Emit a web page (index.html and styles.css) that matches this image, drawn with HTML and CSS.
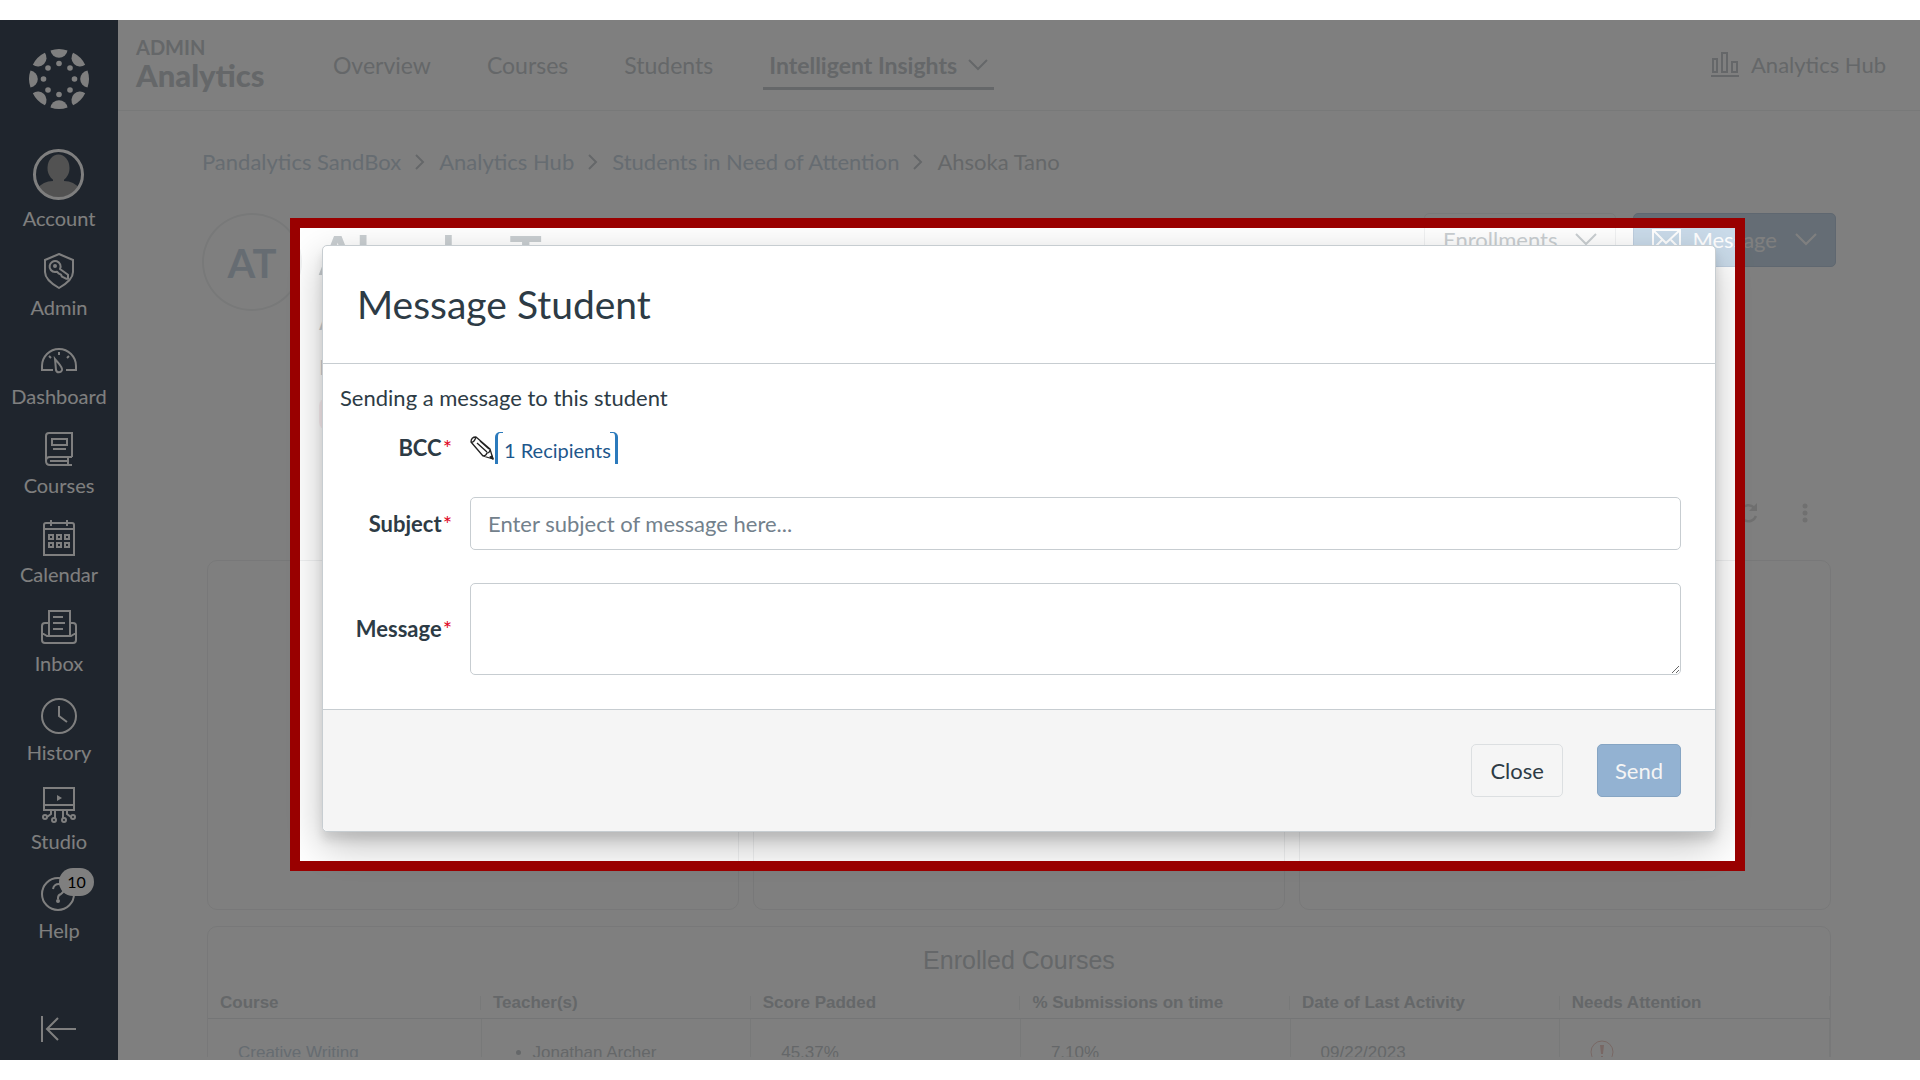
FILE: index.html
```html
<!DOCTYPE html>
<html lang="en">
<head>
<meta charset="utf-8">
<title>Message Student</title>
<link rel="stylesheet" href="styles.css">
</head>
<body>
<div class="frame">
  <nav class="sidebar" aria-label="Global navigation">
    <a class="logo" href="#" aria-label="Home">
      <svg viewBox="0 0 60 60" width="60" height="60" fill="currentColor">
        <defs><g id="petal"><path d="M21.500 1.500Q30-1.500 38.500 1.500A8.600 8.600 0 0 1 21.500 1.500Z"/></g></defs>
        <use href="#petal"/><use href="#petal" transform="rotate(45 30 30)"/><use href="#petal" transform="rotate(90 30 30)"/><use href="#petal" transform="rotate(135 30 30)"/><use href="#petal" transform="rotate(180 30 30)"/><use href="#petal" transform="rotate(225 30 30)"/><use href="#petal" transform="rotate(270 30 30)"/><use href="#petal" transform="rotate(315 30 30)"/>
        <circle cx="30" cy="14.500" r="2.800"/><circle cx="41" cy="19" r="2.800"/><circle cx="45.500" cy="30" r="2.800"/><circle cx="41" cy="41" r="2.800"/><circle cx="30" cy="45.500" r="2.800"/><circle cx="19" cy="41" r="2.800"/><circle cx="14.500" cy="30" r="2.800"/><circle cx="19" cy="19" r="2.800"/>
      </svg>
    </a>
    <a class="item" href="#">
      <svg viewBox="0 0 51 51" width="51" height="51">
        <clipPath id="face"><circle cx="25.500" cy="25.500" r="23"/></clipPath>
        <g clip-path="url(#face)" fill="#a4a4a4"><ellipse cx="25.500" cy="19" rx="11" ry="13.500"/><path d="M20 28h11v4q10 0 16 8v11H4V40q6-8 16-8z"/></g>
        <circle cx="25.500" cy="25.500" r="24" fill="none" stroke="#fff" stroke-width="3"/>
      </svg>
      <span>Account</span>
    </a>
    <a class="item" href="#">
      <svg class="icon" viewBox="0 0 36 36"><path d="M18 1 32 7V19c0 7-7 12-14 16C11 31 4 26 4 19V7z"/><path d="M19 16a5.500 5.500 0 1 0-5 3l2-.3 2 2 2 1 1 2 4 2h2v-4z" stroke-linejoin="round"/><circle cx="14" cy="13" r="1"/></svg>
      <span>Admin</span>
    </a>
    <a class="item" href="#">
      <svg class="icon" viewBox="0 0 36 36"><path d="M12 28H1V24a17 17 0 0 1 34 0v4H25M18 10v3M8 14l2 2M28 14l-2 2M14 17l1 11c.5 3 5 3 6 0 .5-3-3-6-7-11z"/></svg>
      <span>Dashboard</span>
    </a>
    <a class="item" href="#">
      <svg class="icon" viewBox="0 0 36 36"><path d="M31 26V2H8Q5 2 5 5v25q0 4 4 4h22M31 26H9q-4 0-4 4M27 26v8M9 30h17M11 8h15v6H11zM12 18h13"/></svg>
      <span>Courses</span>
    </a>
    <a class="item" href="#">
      <svg class="icon" viewBox="0 0 36 36"><path d="M3 35V5q0-2 2-2h26q2 0 2 2v30zM3 9h30M10 0v6M26 0v6"/><path d="M8 15h4v4H8zM16 15h4v4h-4zM24 15h4v4h-4zM8 23h4v4H8zM16 23h4v4h-4zM24 23h4v4h-4z"/></svg>
      <span>Calendar</span>
    </a>
    <a class="item" href="#">
      <svg class="icon" viewBox="0 0 36 36"><path d="M8 27V2h21v25M8 14H4q-3 0-3 3v14q0 3 3 3h28q3 0 3-3V17q0-3-3-3h-3M1 24l5 3h24l5-3M12 8h10M12 14h12M12 20h10"/></svg>
      <span>Inbox</span>
    </a>
    <a class="item" href="#">
      <svg class="icon" viewBox="0 0 36 36"><circle cx="18" cy="18" r="17"/><path d="M18 8v10l8 6"/></svg>
      <span>History</span>
    </a>
    <a class="item" href="#">
      <svg class="icon" viewBox="0 0 36 36"><path d="M3 1h30v22H3zM3 18h30M10 23v4l-4 3M14 23v8M22 23v8M26 23v4l4 3"/><path d="m16 8 5 3-5 3z" fill="currentColor" stroke="none"/><circle cx="4" cy="30" r="2"/><circle cx="13" cy="33" r="2"/><circle cx="23" cy="33" r="2"/><circle cx="32" cy="30" r="2"/></svg>
      <span>Studio</span>
    </a>
    <a class="item help" href="#">
      <svg class="icon" viewBox="0 0 36 36"><circle cx="17" cy="18" r="16"/><path d="M12 13q1-5 6-5 5 0 5 5 0 3-3 5-3 1-3 4v1"/><circle cx="17" cy="25" r="1"/></svg>
      <b class="badge">10</b>
      <span>Help</span>
    </a>
    <button class="collapse" type="button" aria-label="Minimize navigation">
      <svg class="icon" viewBox="0 0 36 36"><path d="M1 5v26M35 18H6M17 7 6 18l11 11"/></svg>
    </button>
  </nav>

  <main class="main">
    <header class="topbar">
      <div class="brand"><small>ADMIN</small><strong>Analytics</strong></div>
      <nav class="tabs" aria-label="Analytics">
        <a href="#">Overview</a>
        <a href="#">Courses</a>
        <a href="#">Students</a>
        <a class="active" href="#">Intelligent Insights
          <svg viewBox="0 0 20 12" width="20" height="12"><path d="m1 1 9 9 9-9"/></svg></a>
      </nav>
      <a class="hub" href="#">
        <svg viewBox="0 0 28 26" width="28" height="26"><path d="M2 7h4v13H2zM11 1h5v19h-5zM21 10h5v10h-5zM0 24h28"/></svg>
        Analytics Hub</a>
    </header>

    <div class="content">
      <nav class="crumbs" aria-label="Breadcrumb">
        <a href="#">Pandalytics SandBox</a>
        <svg viewBox="0 0 10 16" width="10" height="16"><path d="m1 1 7 7-7 7"/></svg>
        <a href="#">Analytics Hub</a>
        <svg viewBox="0 0 10 16" width="10" height="16"><path d="m1 1 7 7-7 7"/></svg>
        <a href="#">Students in Need of Attention</a>
        <svg viewBox="0 0 10 16" width="10" height="16"><path d="m1 1 7 7-7 7"/></svg>
        <span>Ahsoka Tano</span>
      </nav>

      <section class="student">
        <div class="avatar">AT</div>
        <div class="info">
          <h1>Ahsoka Tano</h1>
          <p class="line-large">A</p>
          <p>L</p>
          <span class="pill"></span>
        </div>
        <div class="actions">
          <button class="btn-plain" type="button">Enrollments
            <svg viewBox="0 0 22 14" width="22" height="14"><path d="m1 1 10 10L21 1"/></svg></button>
          <button class="btn-blue" type="button">
            <svg viewBox="0 0 29 22" width="29" height="22"><path d="M1 1h27v20H1zM1 1l13 13L28 1M1 20l9-9M28 20l-9-9"/></svg>
            Message
            <svg class="chev" viewBox="0 0 22 14" width="22" height="14"><path d="m1 1 10 10L21 1"/></svg></button>
        </div>
      </section>

      <section class="report">
        <div class="tools">
          <button type="button" aria-label="Refresh"><svg viewBox="0 0 24 24" width="24" height="24"><path d="M18 6.500A8 8 0 1 0 20 15" fill="none" stroke="currentColor" stroke-width="2.500"/><path d="M21 2v8h-8z" fill="currentColor"/></svg></button>
          <button type="button" aria-label="More options"><svg viewBox="0 0 24 24" width="24" height="24" fill="currentColor"><circle cx="12" cy="5" r="2.500"/><circle cx="12" cy="12" r="2.500"/><circle cx="12" cy="19" r="2.500"/></svg></button>
        </div>
        <div class="cards"><div class="card"></div><div class="card"></div><div class="card"></div></div>
        <div class="table-card">
          <h2>Enrolled Courses</h2>
          <table>
            <thead><tr><th class="first"><span>Course</span></th><th><span>Teacher(s)</span></th><th><span>Score Padded</span></th><th><span>% Submissions on time</span></th><th><span>Date of Last Activity</span></th><th><span>Needs Attention</span></th></tr></thead>
            <tbody><tr>
              <td><a href="#">Creative Writing</a></td>
              <td class="teachers"><ul><li>Jonathan Archer</li></ul></td>
              <td>45.37%</td><td>7.10%</td><td>09/22/2023</td>
              <td><svg class="alert" viewBox="0 0 24 24" width="24" height="24"><circle cx="12" cy="12" r="11" fill="none" stroke="currentColor"/><path d="M10 5h4l-1 9h-2zM11 16h2v3h-2z" fill="currentColor"/></svg></td>
            </tr></tbody>
          </table>
        </div>
      </section>
    </div>
  </main>

  <form class="modal" role="dialog" aria-labelledby="modal-title">
    <header class="modal-head"><h2 id="modal-title">Message Student</h2></header>
    <div class="modal-body">
      <p>Sending a message to this student</p>
      <div class="fields">
        <span class="label">BCC<i>*</i></span>
        <div class="bcc">
          <svg viewBox="0 0 24 24" width="24" height="24" fill="none" stroke="#222" stroke-width="1.300" stroke-linejoin="round"><path d="M1 6Q1 1 6 1L20 13l3 10-10-3L1 6Q4 7 6 1M13 20q3 0 4-3 3 0 3-4M7 7l10 9M10 5l9 8"/><path d="m20 21 3 2-1-3z" fill="#222"/></svg>
          <a class="recipients" href="#">1 Recipients</a>
        </div>
        <label for="subject">Subject<i>*</i></label>
        <input id="subject" type="text" placeholder="Enter subject of message here...">
        <label for="message">Message<i>*</i></label>
        <textarea id="message"></textarea>
      </div>
    </div>
    <footer class="modal-foot">
      <button class="close" type="button">Close</button>
      <button class="send" type="submit">Send</button>
    </footer>
  </form>
</div>
</body>
</html>
```
FILE: styles.css
```css
:root {
  --muted: #cacfd2;
  --muted-link: #ccd8e3;
  --faint: #f1f2f3;
  --ink: #2d3b45;
  --line: #c7cdd1;
}

* { box-sizing: border-box; }
body { margin: 0; background: #fff; font: 22px/32px Lato, sans-serif; color: var(--ink); }
h1, h2, p, ul { margin: 0; }
a { color: inherit; text-decoration: none; }
button { font: inherit; cursor: pointer; }
svg { display: block; flex: none; }

.frame {
  position: relative;
  display: flex;
  height: calc(100vh - 40px);
  margin: 20px 0;
  overflow: hidden;
}

/* Global navigation */
.sidebar {
  display: flex;
  flex-direction: column;
  align-items: center;
  flex: none;
  width: 118px;
  padding: 29px 0 13px;
  background: #3e4b5a;
  color: #fff;
}
.logo { margin-bottom: 28px; }
.item {
  position: relative;
  display: flex;
  flex-direction: column;
  align-items: center;
  gap: 6px;
  padding: 12px 0 11px;
  font-size: 20px;
  line-height: 24px;
}
.icon { width: 36px; height: 36px; fill: none; stroke: currentColor; stroke-width: 2; }
.badge {
  position: absolute;
  top: 4px;
  left: 50%;
  width: 35px;
  border-radius: 14px;
  background: #fff;
  color: #000;
  font-size: 16px;
  font-weight: 400;
  line-height: 28px;
  text-align: center;
}
.collapse { margin-top: auto; padding: 0; border: 0; background: none; color: inherit; }

/* Page header */
.main { display: flex; flex-direction: column; flex: 1; min-width: 0; color: var(--muted); }
.topbar {
  display: flex;
  align-items: center;
  flex: none;
  height: 91px;
  padding: 0 34px 0 18px;
  border-bottom: 1px solid var(--faint);
}
.brand { display: flex; flex-direction: column; width: 191px; padding-bottom: 5px; font-weight: 700; }
.brand small { font-size: 20px; line-height: 24px; }
.brand strong { font-size: 31px; line-height: 32px; }
.tabs { display: flex; gap: 44px; font-size: 23px; }
.tabs a { display: flex; align-items: center; gap: 11px; padding: 9px 6px 6px; border-bottom: 3px solid transparent; }
.tabs .active { font-weight: 700; border-color: var(--muted); }
.topbar svg, .crumbs svg, .actions svg { fill: none; stroke: currentColor; stroke-width: 2; }
.hub { display: flex; align-items: center; gap: 12px; margin-left: auto; }

/* Page content */
.content { flex: 1; min-height: 0; margin-bottom: 3px; padding: 35px 84px 0; overflow: hidden; }
.crumbs { display: flex; align-items: center; gap: 14px; }
.crumbs a { color: var(--muted-link); }
.student { display: flex; gap: 17px; margin-top: 35px; }
.avatar {
  width: 100px;
  height: 98px;
  border: 2px solid var(--faint);
  border-radius: 50%;
  color: #ccd9e5;
  font-size: 40px;
  font-weight: 700;
  line-height: 96px;
  text-align: center;
}
.info { display: flex; flex-direction: column; gap: 15px; padding-top: 8px; }
.info h1 { font-size: 54px; line-height: 68px; }
.line-large { font-size: 26px; }
.pill { width: 120px; height: 32px; border-radius: 8px; background: #fbf0f2; }
.actions { display: flex; align-items: flex-start; gap: 17px; margin-left: auto; }
.actions button {
  display: flex;
  align-items: center;
  gap: 18px;
  height: 54px;
  padding: 0 18px;
  border: 1px solid var(--faint);
  border-radius: 5px;
  background: #fff;
  color: var(--muted);
}
.actions .btn-blue { gap: 11px; border-color: #bfcfe0; background: #cadbea; color: #fff; }
.btn-blue .chev { margin-left: 7px; }

.report { padding: 0 5px; font-family: "Liberation Sans", sans-serif; }
.tools { display: flex; justify-content: flex-end; gap: 33px; margin: 67px 14px 31px 0; }
.tools button { height: 32px; padding: 4px 0; border: 0; background: none; color: #e0e0e0; }
.cards { display: grid; grid-template-columns: repeat(3, 1fr); gap: 14px; margin-bottom: 16px; }
.card, .table-card { border: 1px solid #f0f1f2; border-radius: 10px; }
.card { height: 350px; }
.table-card { padding-top: 17px; }
.table-card h2 { font-size: 25px; font-weight: 400; text-align: center; }
table { width: 100%; margin-top: 12px; border-collapse: collapse; table-layout: fixed; font-size: 17px; line-height: 20px; }
th { padding: 8px 0; border-bottom: 1px solid #e8eaec; text-align: left; line-height: 14px; }
.first { width: 273px; }
th span { display: block; padding-left: 12px; border-right: 1px solid var(--faint); }
td { padding: 24px 0 24px 30px; border-right: 1px solid var(--faint); vertical-align: top; }
td a { color: var(--muted-link); }
.teachers ul { padding-left: 21px; }
.alert { margin-top: -3px; color: #f0cfc8; }

/* Dialog */
.modal {
  position: absolute;
  top: 225px;
  left: 322px;
  right: 204px;
  border: 1px solid var(--line);
  border-radius: 5px;
  background: #fff;
  box-shadow: 0 8px 10px rgba(0, 0, 0, .1), 0 14px 39px rgba(0, 0, 0, .25);
}
/* Red spotlight frame: the spread shadow dims everything around it */
.modal::after {
  content: "";
  position: absolute;
  inset: -28px -30px -40px -33px;
  border: 10px solid #900;
  box-shadow: 0 0 0 2000px rgba(0, 0, 0, .5);
  pointer-events: none;
}
.modal-head { padding: 34px 34px 35px; border-bottom: 1px solid var(--line); }
.modal-head h2 { font-size: 39px; font-weight: 400; line-height: 48px; }
.modal-body { padding: 18px 34px 34px 17px; }
.fields { display: grid; grid-template-columns: 112px 1fr; gap: 33px 18px; align-items: center; margin-top: 18px; }
.fields label, .label { font-weight: 700; text-align: right; }
.fields i { margin-left: 1px; color: #e0061f; font-style: normal; font-weight: 400; }
.bcc { display: flex; align-items: center; gap: 1px; }
.recipients {
  position: relative;
  padding: 4px 7px 0 9px;
  color: #1d578c;
  font-size: 20px;
  line-height: 28px;
}
.recipients::before, .recipients::after {
  content: "";
  position: absolute;
  top: 0;
  bottom: 0;
  width: 5px;
  border: solid #2b7abc;
}
.recipients::before { left: 0; border-width: 1px 0 0 3px; border-radius: 5px 0 0; }
.recipients::after { right: 0; border-width: 1px 3px 0 0; border-radius: 0 5px 0 0; }
.fields input, .fields textarea {
  display: block;
  width: 100%;
  padding: 0 17px;
  border: 1px solid var(--line);
  border-radius: 5px;
  background: #fff;
  color: var(--ink);
  font: inherit;
}
.fields input { height: 53px; }
.fields input::placeholder { color: #73818c; opacity: 1; }
.fields textarea { height: 92px; padding: 12px 17px; resize: vertical; }
.modal-foot {
  display: flex;
  justify-content: flex-end;
  gap: 34px;
  padding: 34px;
  border-top: 1px solid var(--line);
  border-radius: 0 0 5px 5px;
  background: #f5f5f5;
}
.modal-foot button { height: 53px; padding: 0 17px; border: 1px solid #dcdfe1; border-radius: 5px; background: #f5f5f5; color: var(--ink); }
.modal-foot .close { padding: 0 18px; }
.modal-foot .send { border-color: #86a5c3; background: #93b2d2; color: #f5f5f5; }
```
